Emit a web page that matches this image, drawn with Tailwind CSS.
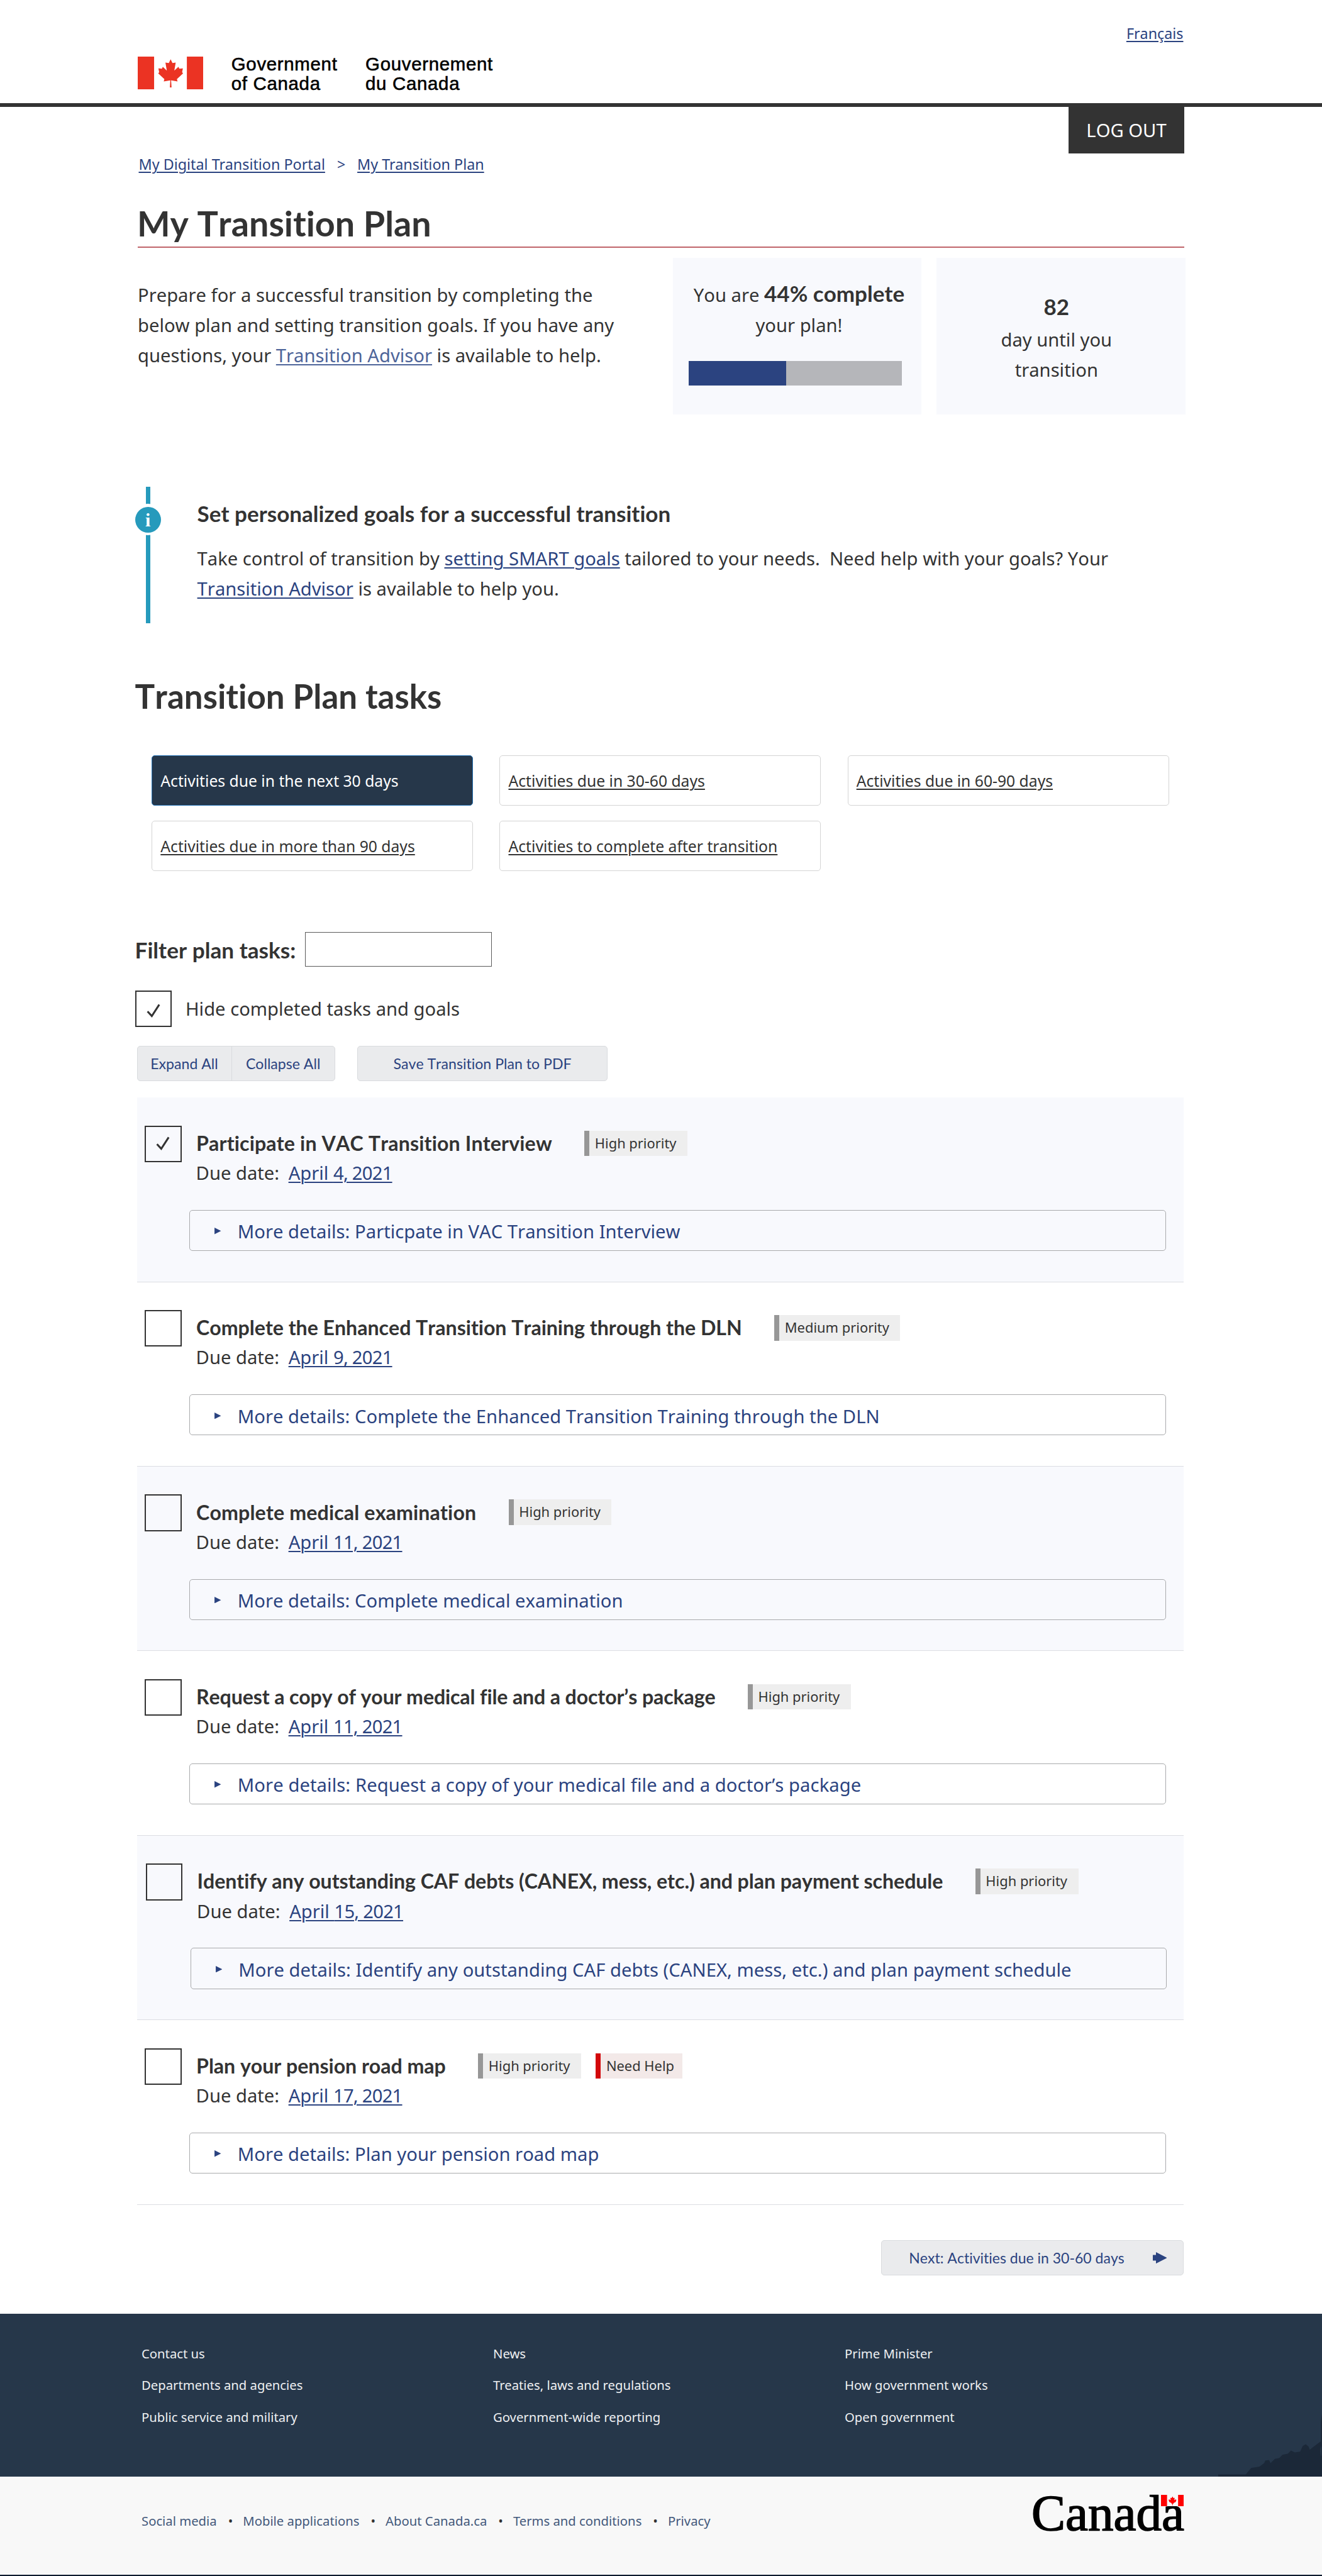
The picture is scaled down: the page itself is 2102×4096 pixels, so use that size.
<!DOCTYPE html>
<html lang="en">
<head>
<meta charset="utf-8">
<title>My Transition Plan</title>
<script src="https://cdn.jsdelivr.net/npm/@tailwindcss/browser@4"></script>
</head>
<body class="bg-white font-['Noto_Sans',sans-serif] text-[29.2px] leading-[48px] text-[#333] w-[2102px] h-[4096px] overflow-hidden flex flex-col [font-kerning:none] [font-variant-ligatures:none]">

<header class="h-[170px] shrink-0 border-b-[6px] border-[#333] pt-[38px] pl-[219px] pr-[220.5px]">
  <div class="flex justify-end text-[23.3px] leading-[30px]"><a class="underline decoration-[1.5px] underline-offset-[3px] text-[#2b4380]">Français</a></div>
  <div class="flex mt-[18px] font-['Liberation_Sans',sans-serif] text-[29.4px] leading-[31px] tracking-[0.7px] text-black [-webkit-text-stroke:0.6px_black]">
    <svg class="mt-[3.7px] w-[104.4px] h-[52.6px]" viewBox="0 0 429 216"><g fill="#eb3323"><path d="M0 0h107v216H0zM321 0h108v216H321z"/><path d="M215 17l12 25 21-3-9 52 27-24 6 12 23-2-5 25 6 8-40 37 4 15-42-7 3 46h-11l3-46-43 7 4-15-40-37 6-8-5-25 23 2 6-12 26 24-9-52 22 3z"/></g></svg>
    <div class="ml-[44.4px] w-[213.3px] whitespace-nowrap">Government<br>of Canada</div>
    <div class="whitespace-nowrap">Gouvernement<br>du Canada</div>
  </div>
</header>

<main class="h-[3508.8px] shrink-0 flex flex-col">
  <div class="pl-[219px] pr-[219px] h-[603.7px]">
    <div class="flex justify-end h-[73.6px]"><button class="w-[184px] h-full bg-[#333] text-white">LOG OUT</button></div>
    <nav class="mt-[1.6px] flex text-[23.35px] leading-[32px] pl-[1.5px] text-[#2b4380] [font-kerning:normal]">
      <a class="underline decoration-[1.5px] underline-offset-[3px]">My Digital Transition Portal</a><span class="ml-[19px] mr-[18.8px]">&gt;</span><a class="underline decoration-[1.5px] underline-offset-[3px]">My Transition Plan</a>
    </nav>
    <h1 class="mt-[47.8px] h-[60px] font-['Lato',sans-serif] font-bold text-[55.7px] leading-[60px] -ml-[1px]">My Transition Plan</h1>
    <div class="mt-[7.4px] h-[2px] bg-[#c0646a]"></div>
    <div class="flex mt-[15.8px] -mr-[2px]">
      <p class="w-[850.7px] pt-[35.1px] leading-[48.05px]">Prepare for a successful transition by completing the<br>below plan and setting transition goals. If you have any<br>questions, your <a class="underline decoration-[1.5px] underline-offset-[3px] text-[#4d6499]">Transition Advisor</a> is available to help.</p>
      <section class="w-[395.5px] h-[249.2px] bg-[#f8f9fd] pt-[34.7px] px-[25px]">
        <p class="text-center leading-[48.5px] -mr-[6px]">You are <b class="font-['Lato',sans-serif] text-[35px] leading-none">44% complete</b><br>your plan!</p>
        <div class="mt-[32px] h-[39.4px] w-[339.2px] bg-[#b5b6ba]"><div class="h-full bg-[#2b4380]" style="width:45.8%"></div></div>
      </section>
      <section class="ml-[23.5px] w-[396.2px] h-[249.2px] bg-[#f8f9fd] pt-[48.7px] pr-[14px] text-center">
        <p class="font-['Lato',sans-serif] font-bold text-[35px] leading-[56px]">82</p>
        <p class="pt-[0.8px]">day until you<br>transition</p>
      </section>
    </div>
  </div>

  <section class="flex h-[217.5px] pl-[214.6px]">
    <div class="relative w-[41px]">
      <div class="ml-[17.3px] w-[7.5px] h-full bg-[#269abc]"></div>
      <div class="absolute left-[-4.4px] top-[27.7px] size-[49.8px] rounded-full bg-white p-[4.4px]"><div class="size-[41px] rounded-full bg-[#269abc] text-white text-center font-['Liberation_Serif',serif] font-bold text-[30px] leading-[42px]">i</div></div>
    </div>
    <div class="ml-[58px] pt-[18.8px]">
      <h2 class="font-['Lato',sans-serif] font-bold text-[35.05px]">Set personalized goals for a successful transition</h2>
      <p class="mt-[24px]">Take control of transition by <a class="underline decoration-[1.5px] underline-offset-[3px] text-[#2b4380]">setting SMART goals</a> tailored to your needs.&nbsp; Need help with your goals? Your<br><a class="underline decoration-[1.5px] underline-offset-[3px] text-[#2b4380]">Transition Advisor</a> is available to help you.</p>
    </div>
  </section>

  <h2 class="mt-[84px] ml-[214.5px] font-['Lato',sans-serif] font-bold text-[52.9px] leading-[64px]">Transition Plan tasks</h2>
  <nav class="mt-[62.1px] ml-[241.3px] grid grid-cols-[511px_511px_511px] auto-rows-[80px] gap-x-[42.2px] gap-y-[23.5px] text-[24.7px]">
    <a class="flex items-center pt-[2px] pl-[13px] border border-[#2572b4] rounded-[5px] bg-[#26374a] text-white">Activities due in the next 30 days</a>
    <a class="flex items-center pt-[2px] pl-[13px] border border-[#d4d4d4] rounded-[5px] underline decoration-[1.5px] underline-offset-[3px]">Activities due in 30-60 days</a>
    <a class="flex items-center pt-[2px] pl-[13px] border border-[#d4d4d4] rounded-[5px] underline decoration-[1.5px] underline-offset-[3px]">Activities due in 60-90 days</a>
    <a class="flex items-center pt-[2px] pl-[13px] border border-[#d4d4d4] rounded-[5px] underline decoration-[1.5px] underline-offset-[3px]">Activities due in more than 90 days</a>
    <a class="flex items-center pt-[2px] pl-[13px] border border-[#d4d4d4] rounded-[5px] underline decoration-[1.5px] underline-offset-[3px]">Activities to complete after transition</a>
  </nav>

  <div class="mt-[96.8px] ml-[214.5px] flex h-[55.5px]">
    <label class="w-[270.1px] pt-[4px] font-['Lato',sans-serif] font-bold text-[35.2px]">Filter plan tasks:</label>
    <div class="w-[297.8px] h-full border border-[#5a5a5a] bg-white"></div>
  </div>
  <div class="mt-[37.8px] ml-[214.6px] flex h-[58.4px]">
    <div class="size-[58.4px] border-2 border-[#333] pt-[19.5px] pl-[16px]"><svg class="w-[22px] h-[22px]" viewBox="0 0 22 22" fill="none" stroke="#333" stroke-width="3"><path d="M1.6 12.2L8.4 19.6 20.2 1.4"/></svg></div>
    <span class="ml-[22px] pt-[5px]">Hide completed tasks and goals</span>
  </div>
  <div class="mt-[29.3px] ml-[217.5px] flex h-[56.6px] font-['Lato',sans-serif] text-[23.1px] text-[#2b4380]">
    <div class="flex w-[315.3px] bg-[#eaebed] border-[1.5px] border-[#d9dbde] rounded-[5px]">
      <button class="w-[150px] border-r border-[#d9dbde]">Expand All</button><button class="grow">Collapse All</button>
    </div>
    <button class="ml-[35px] w-[398.4px] bg-[#eaebed] border-[1.5px] border-[#d9dbde] rounded-[5px]">Save Transition Plan to PDF</button>
  </div>

  <div id="tasks" class="mt-[26px] ml-[217.5px] w-[1664.5px]"></div>

  <div class="mt-[56.1px] ml-[1401.3px] w-[480.3px] h-[56.2px] flex items-center pl-[43px] bg-[#eaebed] border-[1.5px] border-[#d9dbde] rounded-[5px] font-['Lato',sans-serif] text-[23px] text-[#2b4380]">
    <span class="w-[387.6px] pt-px">Next: Activities due in 30-60 days</span>
    <svg class="w-[22.6px] h-[18.2px]" viewBox="0 0 22.6 18.2" fill="#2b4380"><path d="M0 4.4h5V0l17.6 9.1L5 18.2v-4.7H0z"/></svg>
  </div>
</main>

<footer class="shrink-0 text-[20.27px] [font-kerning:normal]">
  <div class="relative h-[258.8px] bg-[#26374a] pt-[38px] pl-[225px] grid grid-cols-[559px_559px_559px] content-start leading-[50.6px] text-[#eef0f2]">
    <a>Contact us</a><a>News</a><a>Prime Minister</a>
    <a>Departments and agencies</a><a>Treaties, laws and regulations</a><a>How government works</a>
    <a>Public service and military</a><a>Government-wide reporting</a><a>Open government</a>
    <svg class="absolute right-0 bottom-0 w-[182.5px] h-[165px]" viewBox="0 0 750 678"><path fill="#1b2838" d="M70 664H250L285 622 340 612 370 590 378 572 402 570 412 590 440 562 470 556 490 535 525 528 545 507 570 520 605 515 622 478 642 466 660 482 668 502 690 485 720 462 740 448V320L750 260V678H70z"/><path fill="#26374a" d="M741 482q-9 28 0 60h3v-60z"/></svg>
  </div>
  <div class="relative h-[156.1px] bg-[#f8f8f8] pl-[225px] pt-[46.9px] flex text-[#43587b]">
    <a>Social media</a><span class="ml-[18px] mr-[16px] text-[#333]">•</span><a>Mobile applications</a><span class="ml-[18px] mr-[16px] text-[#333]">•</span><a>About Canada.ca</a><span class="ml-[18px] mr-[16px] text-[#333]">•</span><a>Terms and conditions</a><span class="ml-[18px] mr-[16px] text-[#333]">•</span><a>Privacy</a>
    <div class="absolute left-[1640px] top-[17.8px] font-['Liberation_Serif',serif] text-[81px] leading-[82px] text-black [-webkit-text-stroke:1.6px_black]">Canada</div>
    <svg class="absolute left-[1845.7px] top-[29.4px] w-[36.6px] h-[18.2px]" viewBox="0 0 366 182"><path fill="#f8f8f8" d="M0 0h366v182H0z"/><g fill="#f00"><path d="M0 0h96v182H0zM272 0h94v182h-94z"/><path d="M183 26l16 26 18-6-5 40 26-16 6 14-10 28-34 18v10h-12v24h-10v-24h-12v-10l-34-18-10-28 6-14 26 16-5-40 18 6z"/></g></svg>
  </div>
  <div class="h-[3px] bg-[#0e1b2e]"></div>
</footer>

<script>
const tasks = [
  ['Participate in VAC Transition Interview', '4, 2021', 'High', 0.13, 'Particpate in VAC Transition Interview', true],
  ['Complete the Enhanced Transition Training through the DLN', '9, 2021', 'Medium', -0.04],
  ['Complete medical examination', '11, 2021', 'High', 0.13],
  ['Request a copy of your medical file and a doctor’s package', '11, 2021', 'High', -0.15],
  ['Identify any outstanding CAF debts (CANEX, mess, etc.) and plan payment schedule', '15, 2021', 'High', -0.08],
  ['Plan your pension road map', '17, 2021', 'High', -0.05, null, false, true],
];
const check = '<svg class="w-[22px] h-[22px]" viewBox="0 0 22 22" fill="none" stroke="#333" stroke-width="3"><path d="M1.6 12.2L8.4 19.6 20.2 1.4"/></svg>';
document.getElementById('tasks').innerHTML = tasks.map(([name, due, priority, tracking, details, done, help], i) => `
  <article class="flex h-[293.4px] border-b-[1.5px] border-[#dcdde2] ${i % 2 ? '' : 'bg-[#f8f9fd]'} ${i === 4 ? 'pl-[14.3px]' : 'pl-[12.8px]'}">
    <div class="mt-[44.5px] size-[58.4px] shrink-0 border-2 border-[#333] pt-[15.5px] pl-[16px]">${done ? check : ''}</div>
    <div class="ml-[12.4px] pt-[48.7px] w-[1552.7px] shrink-0">
      <div class="flex items-center h-[48px] pl-[11px]">
        <h3 class="font-['Lato',sans-serif] font-bold text-[32.15px] whitespace-nowrap" style="letter-spacing:${tracking}px">${name}</h3>
        <span class="ml-[51.5px] h-[40.6px] leading-[40.6px] text-[21.9px] border-l-[8px] border-[#979797] bg-[#eee] pl-[8.5px] pr-[17.5px]">${priority} priority</span>
        ${help ? '<span class="ml-[23.4px] h-[40.6px] leading-[40.6px] text-[21.9px] border-l-[8px] border-[#d3080c] bg-[#f3e9e8] pl-[8.5px] pr-[13px]">Need Help</span>' : ''}
      </div>
      <p class="mt-[3.2px] pl-[10.5px] leading-[40px]">Due date:<a class="ml-[14.5px] underline decoration-[1.5px] underline-offset-[3px] text-[#2b4380]">April <span class="tracking-[-0.75px]">${due}</span></a></p>
      <div class="mt-[38.7px] h-[65.3px] flex items-center border border-[#a9aaac] rounded-[5px] pl-[39.4px] text-[#2b4380]">
        <svg class="w-[10.5px] h-[10.4px] mt-[2px]" viewBox="0 0 10 10" fill="#2b4380"><path d="M0 0l10 5-10 5z"/></svg>
        <span class="ml-[25.8px] pt-[3.5px] ${i === 3 ? 'tracking-[0.08px]' : 'tracking-[0.02px]'}">More details: ${details || name}</span>
      </div>
    </div>
  </article>`).join('');
</script>
</body>
</html>
